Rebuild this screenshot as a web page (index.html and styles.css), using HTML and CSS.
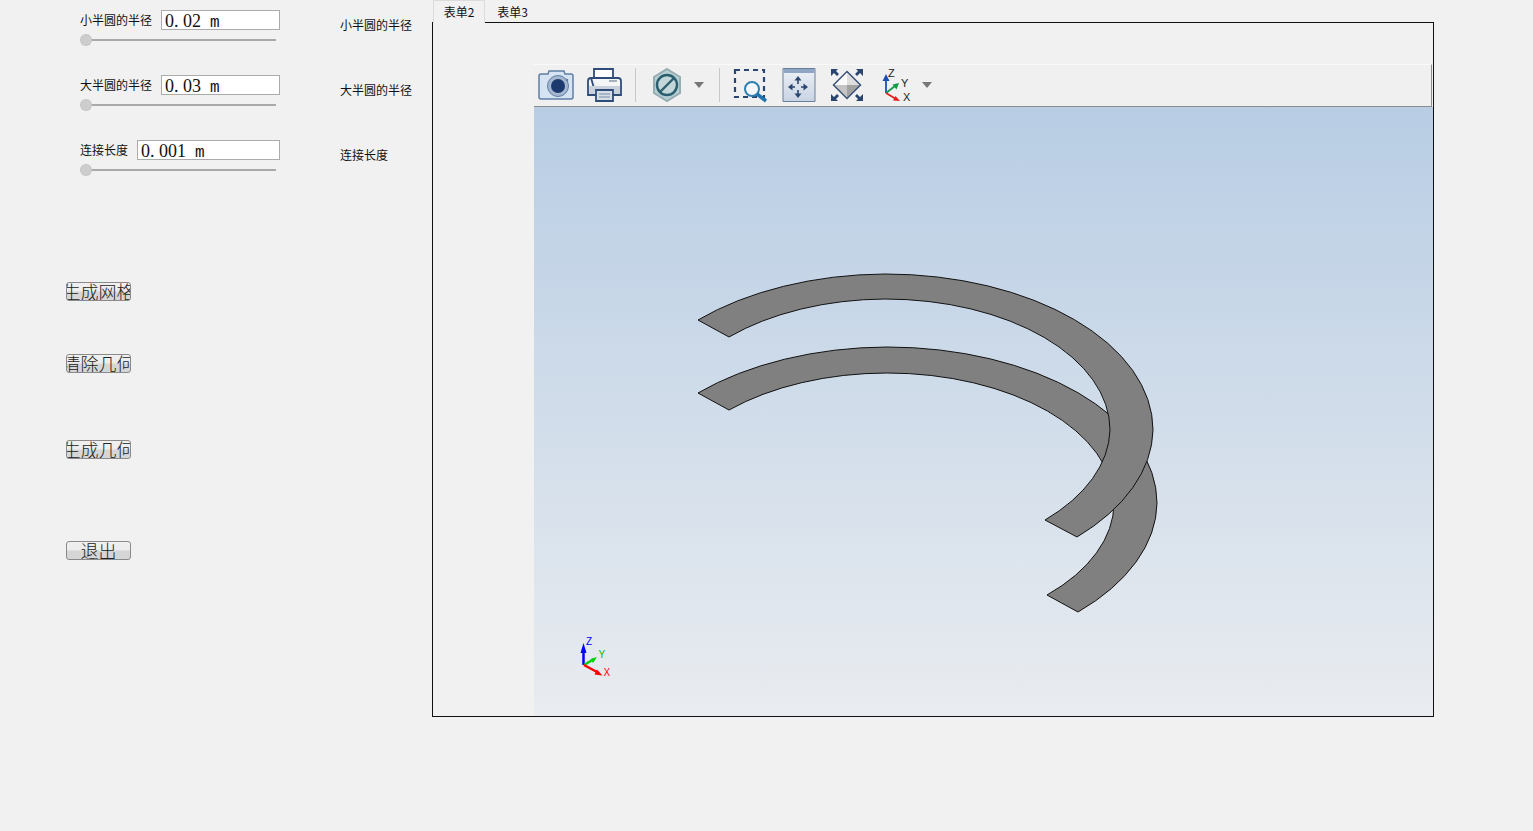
FILE: index.html
```html
<!DOCTYPE html>
<html lang="zh-CN">
<head>
<meta charset="utf-8">
<title>几何</title>
<link rel="stylesheet" href="styles.css">
</head>
<body>
<div class="app">
  <section class="controls">
    <div class="group">
      <div class="row"><span class="label">小半圆的半径</span><div class="field">0. 02  <span class="unit">m</span></div></div>
      <div class="slider"></div>
    </div>
    <div class="group">
      <div class="row"><span class="label">大半圆的半径</span><div class="field">0. 03  <span class="unit">m</span></div></div>
      <div class="slider"></div>
    </div>
    <div class="group">
      <div class="row"><span class="label">连接长度</span><div class="field">0. 001  <span class="unit">m</span></div></div>
      <div class="slider"></div>
    </div>
    <div class="actions">
      <button class="btn">生成网格</button>
      <button class="btn gap-a">清除几何</button>
      <button class="btn gap-b">生成几何</button>
      <button class="btn gap-c">退出</button>
    </div>
  </section>

  <section class="names">
    <div class="name">小半圆的半径</div>
    <div class="name">大半圆的半径</div>
    <div class="name">连接长度</div>
  </section>

  <section class="tabs">
    <div class="tabbar">
      <div class="tab active">表单2</div>
      <div class="tab">表单3</div>
    </div>
    <div class="pane">
      <div class="toolbar">
        <svg class="ico i-cam" viewBox="0 0 36 34">
          <path d="M3 6h7l1-3h15l1 3h6q2 0 2 2v21q0 2-2 2H3q-2 0-2-2V8q0-2 2-2z" fill="#d5e3f2" stroke="#5f7ea5" stroke-width="1.500"/>
          <circle cx="20" cy="18" r="10.500" fill="#a7b7cf" stroke="#5f7ea5"/>
          <circle cx="20" cy="18" r="7" fill="#1c3a6e"/>
          <circle cx="29" cy="12" r="1.300" fill="#5f7ea5"/>
        </svg>
        <svg class="ico i-print" viewBox="0 0 36 34">
          <path d="M8 10V1h19v9" fill="#fff" stroke="#2f4c78" stroke-width="1.800"/>
          <path d="M5 10h27q3 0 3 3v14h-8M10 27H2V13q0-3 3-3z" fill="#f4f6f8" stroke="#2f4c78" stroke-width="1.800"/>
          <path d="M3 18h31v8H3z" fill="#c9d1dc"/>
          <path d="M10 22h17v11H10z" fill="#d5dde7" stroke="#2f4c78" stroke-width="1.800"/>
          <path d="M13 26h11M13 29h11" stroke="#7b8ea8" stroke-width="1.200"/>
          <path d="M23 13h8" stroke="#8a98aa" stroke-width="1.500"/>
        </svg>
        <i class="sep s-a"></i>
        <svg class="ico i-hex" viewBox="0 0 36 34">
          <path d="M18 1l13 8v16l-13 8-13-8V9z" fill="#b7cfd4" stroke="#96adb1" stroke-width="2"/>
          <circle cx="18" cy="17" r="10" fill="#c3d6da" stroke="#2b5f6e" stroke-width="2.400"/>
          <path d="M11 24L25 10" stroke="#2b5f6e" stroke-width="2.400"/>
        </svg>
        <i class="caret c-a"></i>
        <i class="sep s-b"></i>
        <svg class="ico i-zoom" viewBox="0 0 36 34">
          <path d="M3 2h29v27H3z" fill="none" stroke="#2a466f" stroke-width="2.200" stroke-dasharray="5 4"/>
          <circle cx="20" cy="21" r="7" fill="#f4f8fb" stroke="#2f7fb0" stroke-width="2"/>
          <path d="M25 26l9 7" stroke="#1f74ad" stroke-width="3.500"/>
        </svg>
        <svg class="ico i-pan" viewBox="0 0 36 34">
          <defs>
            <linearGradient id="panfill" x1="0" y1="0" x2="0" y2="1">
              <stop offset="0" stop-color="#eef1f6"/>
              <stop offset="1" stop-color="#c8d3e3"/>
            </linearGradient>
          </defs>
          <path d="M3 .5h32v33H3z" fill="url(#panfill)" stroke="#6a7f9c"/>
          <path d="M3.500 1h31v4h-31z" fill="#8ea6c4"/>
          <path d="M18 11v5M18 22v5M10 19h5M21 19h5" stroke="#2a466f" stroke-width="1.600"/>
          <path d="M18 8l3.500 4.500h-7zM18 30l3.500-4.500h-7zM8 19l4.500-3.500v7zM28 19l-4.500-3.500v7z" fill="#2a466f"/>
        </svg>
        <svg class="ico i-fit" viewBox="0 0 36 34">
          <path d="M19 3.500V17H5.500z" fill="#fafafa"/>
          <path d="M19 3.500L32.500 17H19z" fill="#dedede"/>
          <path d="M5.500 17H19v13.500z" fill="#c4c4c4"/>
          <path d="M32.500 17H19v13.500z" fill="#a2a2a2"/>
          <path d="M19 3.500L32.500 17 19 30.500 5.500 17z" fill="none" stroke="#3a5378" stroke-width="1.500"/>
          <path d="M3 1h7L8 3l3 3-2 2-3-3-3 3zM35 1h-7l2 2-3 3 2 2 3-3 3 3zM3 33h7l-2-2 3-3-2-2-3 3-3-3zM35 33h-7l2-2-3-3 2-2 3 3 3-3z" fill="#2a466f"/>
        </svg>
        <svg class="ico i-axes" viewBox="0 0 36 34">
          <path d="M6 25V11" stroke="#1f4fb4" stroke-width="1.800"/>
          <path d="M6 6l3.500 7h-7z" fill="#1f4fb4"/>
          <path d="M6 25l9-7" stroke="#129a4a" stroke-width="1.800"/>
          <path d="M19 15l-2.500 6.500-4-5z" fill="#129a4a"/>
          <path d="M6 25l10 6" stroke="#e52020" stroke-width="1.800"/>
          <path d="M20 33l-7-.5 2.500-4.500z" fill="#e52020"/>
          <text class="ax" x="8" y="9">Z</text>
          <text class="ax" x="21" y="19">Y</text>
          <text class="ax" x="23" y="33">X</text>
        </svg>
        <i class="caret c-b"></i>
      </div>
      <div class="viewer">
        <svg class="scene" viewBox="534 107 899 608">
          <path class="shell" d="M698 393A270 156 0 0 1 887 347A270 156 0 0 1 1157 503A270 156 0 0 1 1078 612L1047 595A227 130 0 0 0 1114 503A227 130 0 0 0 887 373A227 130 0 0 0 729 410Z"/>
          <path class="shell" d="M698 320A268 156 0 0 1 885 274A268 156 0 0 1 1153 430A268 156 0 0 1 1077 537L1045 520A225 131 0 0 0 1110 430A225 131 0 0 0 885 299A225 131 0 0 0 729 337Z"/>
          <path d="M583.500 665V650" stroke="#0000ff" stroke-width="2.500"/>
          <path d="M583.500 643l3 10h-6z" fill="#0000ff"/>
          <path d="M584 665l10-6" stroke="#00d000" stroke-width="2.500"/>
          <path d="M597 657l-4 6-2.500-4z" fill="#00d000"/>
          <path d="M584 665l13 7" stroke="#ff0000" stroke-width="2.500"/>
          <path d="M602.500 675.500l-8-1 2.500-5z" fill="#ff0000"/>
          <text class="tri tz" x="586" y="645">Z</text>
          <text class="tri ty" x="598.500" y="658">Y</text>
          <text class="tri tx" x="603.500" y="676">X</text>
        </svg>
      </div>
    </div>
  </section>
</div>
</body>
</html>
```

FILE: styles.css
```css
* { box-sizing: border-box; }
html, body { margin: 0; height: 100%; }
body {
  background: #f1f1f1;
  color: #111;
  font-family: "Noto Sans CJK SC", "Liberation Sans", sans-serif;
  font-size: 12px;
  overflow: hidden;
}
.app { display: flex; height: 831px; align-items: flex-start; }

/* left column */
.controls { width: 340px; flex: none; padding-top: 10px; }
.group { height: 65px; padding-left: 80px; width: 280px; }
.row { display: flex; align-items: center; gap: 9px; height: 20px; }
.label { flex: none; line-height: 20px; }
.field {
  flex: 1;
  height: 20px;
  background: #fff;
  border: 1px solid #ababab;
  padding: 1px 0 0 3px;
  font: 18px/18px "Liberation Serif", serif;
  white-space: pre;
}
.unit { font: 16px/16px "Liberation Mono", monospace; }
.slider { position: relative; width: 196px; height: 10px; margin-top: 5px; }
.slider::before {
  content: "";
  position: absolute;
  left: 5px; right: 0; top: 4px;
  height: 2px;
  background: #a9a9a9;
}
.slider::after {
  content: "";
  position: absolute;
  left: 0; top: -1px;
  width: 10px; height: 10px;
  border-radius: 50%;
  background: #cdcdcd;
  border: 1px dotted #bbb;
}

.actions { display: flex; flex-direction: column; align-items: flex-start; padding: 77px 0 0 66px; }
.btn {
  width: 65px;
  height: 19px;
  padding: 0;
  border: 1px solid #8a8a8a;
  border-radius: 3px;
  background: linear-gradient(#f0f0f0 0, #ececec 48%, #d6d6d6 52%, #d6d6d6 100%);
  color: #222;
  font: 300 18px/17px "Noto Sans CJK SC", sans-serif;
  white-space: nowrap;
  overflow: hidden;
  display: flex;
  justify-content: center;
}
.gap-a { margin-top: 53px; }
.gap-b { margin-top: 67px; }
.gap-c { margin-top: 82px; }

/* second column */
.names { width: 92px; flex: none; padding-top: 16px; }
.name { height: 65px; line-height: 18px; }

/* tabs */
.tabs { width: 1002px; flex: none; }
.tabbar { display: flex; height: 23px; padding-left: 1px; }
.tab {
  width: 52px;
  height: 22px;
  line-height: 23px;
  text-align: center;
  padding-left: 1px;
}
.tab.active {
  height: 23px;
  background: #f1f1f1;
  border: 1px solid #dcdcdc;
  border-bottom: 0;
  line-height: 22px;
  padding-left: 0;
  position: relative;
  z-index: 1;
}
.tab + .tab { width: 54px; }
.pane {
  height: 695px;
  margin-top: -1px;
  border: 1px solid #111;
  padding: 41px 0 0 101px;
  display: flex;
  flex-direction: column;
}

/* toolbar */
.toolbar {
  flex: none;
  height: 43px;
  margin-right: 1px;
  padding: 3px 0 0 4px;
  display: flex;
  align-items: flex-start;
  background: #f0f0f0;
  border-top: 1px solid #fafafa;
  border-bottom: 1px solid #8d8d8d;
  border-right: 1px solid #8d8d8d;
}
.ico { width: 36px; height: 34px; flex: none; display: block; overflow: visible; }
.i-print { margin-left: 12px; }
.i-hex { margin-left: 13px; }
.i-zoom { margin-left: 12px; }
.i-pan { margin-left: 12px; }
.i-fit { margin-left: 12px; }
.i-axes { margin-left: 16px; }
.sep { width: 1px; height: 34px; background: #c8c8c8; flex: none; }
.s-a { margin-left: 13px; }
.s-b { margin-left: 15px; }
.caret {
  flex: none;
  width: 0; height: 0;
  margin-top: 14px;
  border: 5px solid transparent;
  border-top: 6px solid #777;
  border-bottom: 0;
}
.c-a { margin-left: 9px; }
.c-b { margin-left: 6px; }
.ax { font: 11px "Liberation Sans", sans-serif; fill: #222; }

/* viewer */
.viewer {
  flex: 1;
  background: linear-gradient(#b8cde4, #e9ecf0);
  overflow: hidden;
}
.scene { display: block; width: 899px; height: 608px; }
.shell { fill: #808080; stroke: #111; stroke-width: 1; stroke-linejoin: round; }
.tri { font: 10px "Liberation Sans", sans-serif; }
.tz { fill: #0000ff; }
.ty { fill: #00c000; }
.tx { fill: #ff0000; }
```
